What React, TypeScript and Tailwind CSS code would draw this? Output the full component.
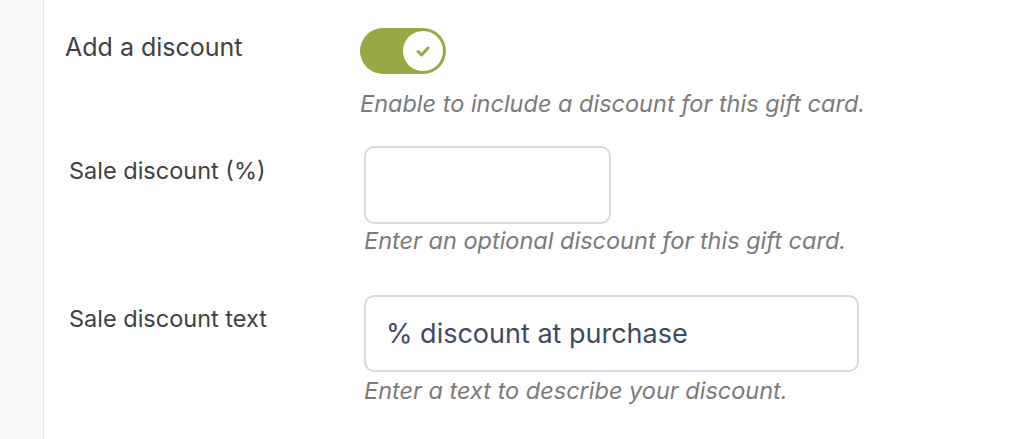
export default function App() {
  return (
    <div
      className="flex h-[439px] w-[1024px] overflow-hidden bg-white"
      style={{ fontFamily: 'Inter, "Liberation Sans", sans-serif' }}
    >
      <div className="w-[44px] shrink-0 border-r border-[#e6e6e6] bg-[#f8f8f8]" />
      <div className="flex flex-1 flex-col pl-[21px] pt-[28px]">
        {/* Add a discount */}
        <div className="flex">
          <div className="w-[295px] pt-[4px] text-[25px] leading-[30px] text-[#414141]">Add a discount</div>
          <div className="flex flex-col">
            <button className="flex h-[46px] w-[86px] items-center justify-end rounded-full bg-[#9aa843] pr-[3px]">
              <span className="flex h-[40px] w-[40px] items-center justify-center rounded-full bg-white">
                <svg width="14" height="11" viewBox="0 0 14 11" fill="none">
                  <path d="M2 5.5l3.5 3.5L12 2" stroke="#9aa843" strokeWidth="3" strokeLinecap="round" strokeLinejoin="round" />
                </svg>
              </span>
            </button>
            <p className="mt-[15px] text-[23.5px] leading-[30px] italic text-[#7a7a7a]">
              Enable to include a discount for this gift card.
            </p>
          </div>
        </div>

        {/* Sale discount (%) */}
        <div className="mt-[27px] flex">
          <div className="w-[299px] pl-[4px] pt-[10px] text-[23.5px] leading-[30px] text-[#414141]">Sale discount (%)</div>
          <div className="flex flex-col">
            <input
              type="text"
              className="h-[78px] w-[247px] rounded-[10px] border-2 border-[#d3dae5] bg-white px-[20px] text-[27px] text-[#3d4a60] outline-none"
            />
            <p className="mt-[2px] text-[23.5px] leading-[30px] italic text-[#7a7a7a]">
              Enter an optional discount for this gift card.
            </p>
          </div>
        </div>

        {/* Sale discount text */}
        <div className="mt-[39px] flex">
          <div className="w-[299px] pl-[4px] pt-[9px] text-[23.5px] leading-[30px] text-[#414141]">Sale discount text</div>
          <div className="flex flex-col">
            <input
              type="text"
              defaultValue="% discount at purchase"
              className="h-[77px] w-[495px] rounded-[10px] border-2 border-[#d3dae5] bg-white px-[20px] text-[27px] text-[#3d4a60] outline-none"
            />
            <p className="mt-[4px] text-[23.5px] leading-[30px] italic text-[#7a7a7a]">
              Enter a text to describe your discount.
            </p>
          </div>
        </div>
      </div>
    </div>
  );
}
